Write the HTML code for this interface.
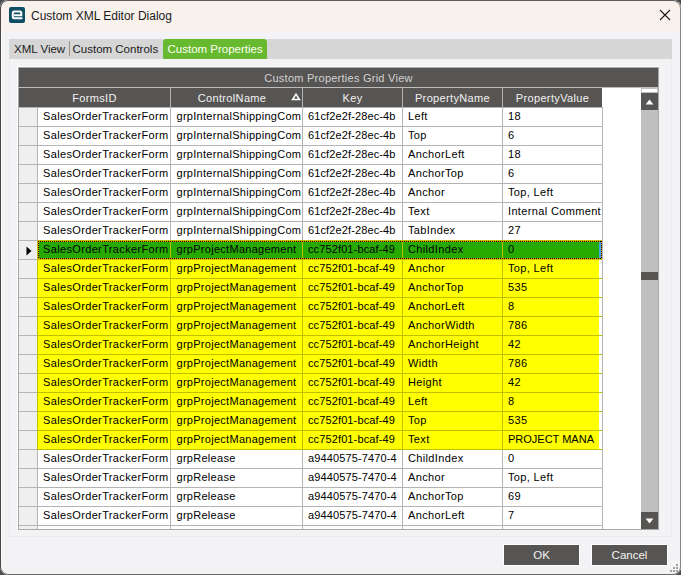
<!DOCTYPE html><html><head><meta charset="utf-8"><style>
*{margin:0;padding:0;box-sizing:border-box}
html,body{width:681px;height:575px;overflow:hidden;background:#4b4b4b;font-family:"Liberation Sans",sans-serif}
.a{position:absolute}
#win{position:absolute;left:0;top:0;width:681px;height:575px;background:#f3f3f5;border-radius:8px;overflow:hidden}
#frame{position:absolute;left:0;top:0;width:681px;height:575px;border-radius:8px;border:1px solid #5a5a5a;border-left-color:#474747;border-right-color:#858585;border-bottom-color:#6a6a6a;pointer-events:none}
.t{position:absolute;white-space:nowrap;overflow:hidden;font-size:11px;line-height:16px;height:18px;letter-spacing:0.35px;color:#000;padding-left:5px}
.k{letter-spacing:0.12px}
.c{letter-spacing:0.28px;padding-left:5.5px}
.u{letter-spacing:0}
.hd{position:absolute;white-space:nowrap;font-size:11px;line-height:17px;height:19px;letter-spacing:0.35px;color:#f2f2f2;text-align:center;background:#575553;padding-top:2px}
.tab{position:absolute;white-space:nowrap;font-size:11.5px;line-height:19px;color:#1a1a1a}
</style></head><body>
<div id="win">
<div class="a" style="left:0;top:0;width:681px;height:31px;background:#f9f1ec"></div>
<div class="a" style="left:1px;top:31px;width:1px;height:535px;background:#fbfbfc"></div>
<svg class="a" style="left:9px;top:7px" width="16" height="16" viewBox="0 0 16 16"><rect x="0" y="0" width="16" height="16" rx="2" fill="#0e4f64"/><path d="M13.4 11.3H5.3Q3.8 11.3 3.8 9.8V6Q3.8 4.5 5.3 4.5H10.8Q12.3 4.5 12.3 6V8.2H5" fill="none" stroke="#fff" stroke-width="2"/></svg>
<div class="a" style="left:31px;top:8px;font-size:12px;line-height:16px;color:#1a1a1a;white-space:nowrap">Custom XML Editor Dialog</div>
<svg class="a" style="left:659px;top:9px" width="12" height="12" viewBox="0 0 12 12"><path d="M1 1L11 11M11 1L1 11" stroke="#1a1a1a" stroke-width="1.1"/></svg>
<div class="a" style="left:9px;top:58px;width:663px;height:479px;border:1px solid #ebebed;border-top:none"></div>
<div class="a" style="left:9px;top:39px;width:663px;height:20px;background:#d6d6d6"></div>
<div class="tab" style="left:14px;top:40px">XML View</div>
<div class="a" style="left:69px;top:41px;width:1px;height:15px;background:#9a9080"></div>
<div class="tab" style="left:72.5px;top:40px">Custom Controls</div>
<div class="a" style="left:163px;top:39px;width:104px;height:20px;background:#67b92f;clip-path:polygon(2px 0,102px 0,104px 2px,104px 20px,0 20px,0 2px)"></div>
<div class="tab" style="left:167.5px;top:40px;color:#fffff4">Custom Properties</div>
<div class="a" style="left:17px;top:66px;width:642px;height:464px;border-left:1px solid #fff;border-top:1px solid #fff"></div>
<div class="a" style="left:18px;top:67px;width:641px;height:463px;border:1px solid #a8a8a8;background:#fff"></div>
<div class="a" style="left:19px;top:68px;width:639px;height:19px;background:#575553"></div>
<div class="a" style="left:19px;top:70px;width:639px;height:17px;font-size:11px;line-height:17px;letter-spacing:0.25px;color:#d2d2d2;text-align:center;white-space:nowrap">Custom Properties Grid View</div>
<div class="a" style="left:19px;top:87px;width:639px;height:1px;background:#bdbdbd"></div>
<div class="hd" style="left:19px;top:88px;width:151px;padding-right:0px">FormsID</div>
<div class="a" style="left:170px;top:88px;width:1px;height:19px;background:#b4b4b4"></div>
<div class="hd" style="left:171px;top:88px;width:131px;padding-right:9px">ControlName</div>
<div class="a" style="left:302px;top:88px;width:1px;height:19px;background:#b4b4b4"></div>
<div class="hd" style="left:303px;top:88px;width:99px;padding-right:0px">Key</div>
<div class="a" style="left:402px;top:88px;width:1px;height:19px;background:#b4b4b4"></div>
<div class="hd" style="left:403px;top:88px;width:99px;padding-right:0px">PropertyName</div>
<div class="a" style="left:502px;top:88px;width:1px;height:19px;background:#b4b4b4"></div>
<div class="hd" style="left:503px;top:88px;width:99px;padding-right:0px">PropertyValue</div>
<svg class="a" style="left:291px;top:92px" width="12" height="11" viewBox="0 0 12 11"><path d="M5 2.2L1.6 7.6H8.4Z" fill="none" stroke="#fff" stroke-width="1.5" stroke-linejoin="miter"/></svg>
<div class="a" style="left:19px;top:107px;width:584px;height:1px;background:#b4b4b4"></div>
<div class="a" style="left:19px;top:108px;width:622px;height:421px;overflow:hidden">
<div class="a" style="left:0;top:0px;width:18px;height:18px;background:#efefef"></div>
<div class="a" style="left:0;top:18px;width:19px;height:1px;background:#b4b4b4"></div>
<div class="a" style="left:18px;top:0px;width:1px;height:19px;background:#b4b4b4"></div>
<div class="a" style="left:19px;top:0px;width:565px;height:18px;background:#fff"></div>
<div class="a" style="left:19px;top:18px;width:565px;height:1px;background:#b4b4b4"></div>
<div class="t" style="left:19px;top:0px;width:132px">SalesOrderTrackerForm</div>
<div class="a" style="left:151px;top:0px;width:1px;height:19px;background:#b4b4b4"></div>
<div class="t c" style="left:152px;top:0px;width:131px">grpInternalShippingCom</div>
<div class="a" style="left:283px;top:0px;width:1px;height:19px;background:#b4b4b4"></div>
<div class="t k" style="left:284px;top:0px;width:99px">61cf2e2f-28ec-4b</div>
<div class="a" style="left:383px;top:0px;width:1px;height:19px;background:#b4b4b4"></div>
<div class="t" style="left:384px;top:0px;width:99px">Left</div>
<div class="a" style="left:483px;top:0px;width:1px;height:19px;background:#b4b4b4"></div>
<div class="t" style="left:484px;top:0px;width:99px">18</div>
<div class="a" style="left:583px;top:0px;width:1px;height:19px;background:#b4b4b4"></div>
<div class="a" style="left:0;top:19px;width:18px;height:18px;background:#efefef"></div>
<div class="a" style="left:0;top:37px;width:19px;height:1px;background:#b4b4b4"></div>
<div class="a" style="left:18px;top:19px;width:1px;height:19px;background:#b4b4b4"></div>
<div class="a" style="left:19px;top:19px;width:565px;height:18px;background:#fff"></div>
<div class="a" style="left:19px;top:37px;width:565px;height:1px;background:#b4b4b4"></div>
<div class="t" style="left:19px;top:19px;width:132px">SalesOrderTrackerForm</div>
<div class="a" style="left:151px;top:19px;width:1px;height:19px;background:#b4b4b4"></div>
<div class="t c" style="left:152px;top:19px;width:131px">grpInternalShippingCom</div>
<div class="a" style="left:283px;top:19px;width:1px;height:19px;background:#b4b4b4"></div>
<div class="t k" style="left:284px;top:19px;width:99px">61cf2e2f-28ec-4b</div>
<div class="a" style="left:383px;top:19px;width:1px;height:19px;background:#b4b4b4"></div>
<div class="t" style="left:384px;top:19px;width:99px">Top</div>
<div class="a" style="left:483px;top:19px;width:1px;height:19px;background:#b4b4b4"></div>
<div class="t" style="left:484px;top:19px;width:99px">6</div>
<div class="a" style="left:583px;top:19px;width:1px;height:19px;background:#b4b4b4"></div>
<div class="a" style="left:0;top:38px;width:18px;height:18px;background:#efefef"></div>
<div class="a" style="left:0;top:56px;width:19px;height:1px;background:#b4b4b4"></div>
<div class="a" style="left:18px;top:38px;width:1px;height:19px;background:#b4b4b4"></div>
<div class="a" style="left:19px;top:38px;width:565px;height:18px;background:#fff"></div>
<div class="a" style="left:19px;top:56px;width:565px;height:1px;background:#b4b4b4"></div>
<div class="t" style="left:19px;top:38px;width:132px">SalesOrderTrackerForm</div>
<div class="a" style="left:151px;top:38px;width:1px;height:19px;background:#b4b4b4"></div>
<div class="t c" style="left:152px;top:38px;width:131px">grpInternalShippingCom</div>
<div class="a" style="left:283px;top:38px;width:1px;height:19px;background:#b4b4b4"></div>
<div class="t k" style="left:284px;top:38px;width:99px">61cf2e2f-28ec-4b</div>
<div class="a" style="left:383px;top:38px;width:1px;height:19px;background:#b4b4b4"></div>
<div class="t" style="left:384px;top:38px;width:99px">AnchorLeft</div>
<div class="a" style="left:483px;top:38px;width:1px;height:19px;background:#b4b4b4"></div>
<div class="t" style="left:484px;top:38px;width:99px">18</div>
<div class="a" style="left:583px;top:38px;width:1px;height:19px;background:#b4b4b4"></div>
<div class="a" style="left:0;top:57px;width:18px;height:18px;background:#efefef"></div>
<div class="a" style="left:0;top:75px;width:19px;height:1px;background:#b4b4b4"></div>
<div class="a" style="left:18px;top:57px;width:1px;height:19px;background:#b4b4b4"></div>
<div class="a" style="left:19px;top:57px;width:565px;height:18px;background:#fff"></div>
<div class="a" style="left:19px;top:75px;width:565px;height:1px;background:#b4b4b4"></div>
<div class="t" style="left:19px;top:57px;width:132px">SalesOrderTrackerForm</div>
<div class="a" style="left:151px;top:57px;width:1px;height:19px;background:#b4b4b4"></div>
<div class="t c" style="left:152px;top:57px;width:131px">grpInternalShippingCom</div>
<div class="a" style="left:283px;top:57px;width:1px;height:19px;background:#b4b4b4"></div>
<div class="t k" style="left:284px;top:57px;width:99px">61cf2e2f-28ec-4b</div>
<div class="a" style="left:383px;top:57px;width:1px;height:19px;background:#b4b4b4"></div>
<div class="t" style="left:384px;top:57px;width:99px">AnchorTop</div>
<div class="a" style="left:483px;top:57px;width:1px;height:19px;background:#b4b4b4"></div>
<div class="t" style="left:484px;top:57px;width:99px">6</div>
<div class="a" style="left:583px;top:57px;width:1px;height:19px;background:#b4b4b4"></div>
<div class="a" style="left:0;top:76px;width:18px;height:18px;background:#efefef"></div>
<div class="a" style="left:0;top:94px;width:19px;height:1px;background:#b4b4b4"></div>
<div class="a" style="left:18px;top:76px;width:1px;height:19px;background:#b4b4b4"></div>
<div class="a" style="left:19px;top:76px;width:565px;height:18px;background:#fff"></div>
<div class="a" style="left:19px;top:94px;width:565px;height:1px;background:#b4b4b4"></div>
<div class="t" style="left:19px;top:76px;width:132px">SalesOrderTrackerForm</div>
<div class="a" style="left:151px;top:76px;width:1px;height:19px;background:#b4b4b4"></div>
<div class="t c" style="left:152px;top:76px;width:131px">grpInternalShippingCom</div>
<div class="a" style="left:283px;top:76px;width:1px;height:19px;background:#b4b4b4"></div>
<div class="t k" style="left:284px;top:76px;width:99px">61cf2e2f-28ec-4b</div>
<div class="a" style="left:383px;top:76px;width:1px;height:19px;background:#b4b4b4"></div>
<div class="t" style="left:384px;top:76px;width:99px">Anchor</div>
<div class="a" style="left:483px;top:76px;width:1px;height:19px;background:#b4b4b4"></div>
<div class="t" style="left:484px;top:76px;width:99px">Top, Left</div>
<div class="a" style="left:583px;top:76px;width:1px;height:19px;background:#b4b4b4"></div>
<div class="a" style="left:0;top:95px;width:18px;height:18px;background:#efefef"></div>
<div class="a" style="left:0;top:113px;width:19px;height:1px;background:#b4b4b4"></div>
<div class="a" style="left:18px;top:95px;width:1px;height:19px;background:#b4b4b4"></div>
<div class="a" style="left:19px;top:95px;width:565px;height:18px;background:#fff"></div>
<div class="a" style="left:19px;top:113px;width:565px;height:1px;background:#b4b4b4"></div>
<div class="t" style="left:19px;top:95px;width:132px">SalesOrderTrackerForm</div>
<div class="a" style="left:151px;top:95px;width:1px;height:19px;background:#b4b4b4"></div>
<div class="t c" style="left:152px;top:95px;width:131px">grpInternalShippingCom</div>
<div class="a" style="left:283px;top:95px;width:1px;height:19px;background:#b4b4b4"></div>
<div class="t k" style="left:284px;top:95px;width:99px">61cf2e2f-28ec-4b</div>
<div class="a" style="left:383px;top:95px;width:1px;height:19px;background:#b4b4b4"></div>
<div class="t" style="left:384px;top:95px;width:99px">Text</div>
<div class="a" style="left:483px;top:95px;width:1px;height:19px;background:#b4b4b4"></div>
<div class="t" style="left:484px;top:95px;width:99px">Internal Comment</div>
<div class="a" style="left:583px;top:95px;width:1px;height:19px;background:#b4b4b4"></div>
<div class="a" style="left:0;top:114px;width:18px;height:18px;background:#efefef"></div>
<div class="a" style="left:0;top:132px;width:19px;height:1px;background:#b4b4b4"></div>
<div class="a" style="left:18px;top:114px;width:1px;height:19px;background:#b4b4b4"></div>
<div class="a" style="left:19px;top:114px;width:565px;height:18px;background:#fff"></div>
<div class="a" style="left:19px;top:132px;width:565px;height:1px;background:#b4b4b4"></div>
<div class="t" style="left:19px;top:114px;width:132px">SalesOrderTrackerForm</div>
<div class="a" style="left:151px;top:114px;width:1px;height:19px;background:#b4b4b4"></div>
<div class="t c" style="left:152px;top:114px;width:131px">grpInternalShippingCom</div>
<div class="a" style="left:283px;top:114px;width:1px;height:19px;background:#b4b4b4"></div>
<div class="t k" style="left:284px;top:114px;width:99px">61cf2e2f-28ec-4b</div>
<div class="a" style="left:383px;top:114px;width:1px;height:19px;background:#b4b4b4"></div>
<div class="t" style="left:384px;top:114px;width:99px">TabIndex</div>
<div class="a" style="left:483px;top:114px;width:1px;height:19px;background:#b4b4b4"></div>
<div class="t" style="left:484px;top:114px;width:99px">27</div>
<div class="a" style="left:583px;top:114px;width:1px;height:19px;background:#b4b4b4"></div>
<div class="a" style="left:0;top:133px;width:18px;height:18px;background:#efefef"></div>
<div class="a" style="left:0;top:151px;width:19px;height:1px;background:#b4b4b4"></div>
<div class="a" style="left:18px;top:133px;width:1px;height:19px;background:#c0c000"></div>
<div class="a" style="left:19px;top:133px;width:565px;height:18px;background:#fff"></div>
<div class="a" style="left:19px;top:151px;width:564px;height:1px;background:#c0c000"></div>
<div class="a" style="left:19px;top:132px;width:564px;height:1px;background:#c0c000"></div>
<div class="a" style="left:19px;top:133px;width:132px;height:18px;background:#27aa00"></div>
<div class="t" style="left:19px;top:133px;width:132px">SalesOrderTrackerForm</div>
<div class="a" style="left:151px;top:133px;width:1px;height:19px;background:#c0c000"></div>
<div class="a" style="left:152px;top:133px;width:131px;height:18px;background:#27aa00"></div>
<div class="t c" style="left:152px;top:133px;width:131px">grpProjectManagement</div>
<div class="a" style="left:283px;top:133px;width:1px;height:19px;background:#c0c000"></div>
<div class="a" style="left:284px;top:133px;width:99px;height:18px;background:#27aa00"></div>
<div class="t k" style="left:284px;top:133px;width:99px">cc752f01-bcaf-49</div>
<div class="a" style="left:383px;top:133px;width:1px;height:19px;background:#c0c000"></div>
<div class="a" style="left:384px;top:133px;width:99px;height:18px;background:#27aa00"></div>
<div class="t" style="left:384px;top:133px;width:99px">ChildIndex</div>
<div class="a" style="left:483px;top:133px;width:1px;height:19px;background:#c0c000"></div>
<div class="a" style="left:484px;top:133px;width:96px;height:18px;background:#27aa00"></div>
<div class="t" style="left:484px;top:133px;width:99px">0</div>
<div class="a" style="left:583px;top:133px;width:1px;height:19px;background:#b4b4b4"></div>
<div class="a" style="left:580px;top:133px;width:2px;height:18px;background:#3da5f0"></div>
<div class="a" style="left:19px;top:133px;width:564px;height:1px;background:repeating-linear-gradient(90deg,#000 0 1px,#ff9a00 1px 2px)"></div>
<div class="a" style="left:19px;top:150px;width:564px;height:1px;background:repeating-linear-gradient(90deg,#000 0 1px,#ff9a00 1px 2px)"></div>
<div class="a" style="left:19px;top:133px;width:1px;height:18px;background:repeating-linear-gradient(180deg,#000 0 1px,#ff9a00 1px 2px)"></div>
<div class="a" style="left:582px;top:133px;width:1px;height:18px;background:repeating-linear-gradient(180deg,#000 0 1px,#ff9a00 1px 2px)"></div>
<svg class="a" style="left:7px;top:138px" width="7" height="10" viewBox="0 0 7 10"><path d="M0.5 0.5L5.5 5L0.5 9.5Z" fill="#000"/></svg>
<div class="a" style="left:0;top:152px;width:18px;height:18px;background:#efefef"></div>
<div class="a" style="left:0;top:170px;width:19px;height:1px;background:#b4b4b4"></div>
<div class="a" style="left:18px;top:152px;width:1px;height:19px;background:#c0c000"></div>
<div class="a" style="left:19px;top:152px;width:565px;height:18px;background:#fff"></div>
<div class="a" style="left:19px;top:170px;width:564px;height:1px;background:#c0c000"></div>
<div class="a" style="left:19px;top:151px;width:564px;height:1px;background:#c0c000"></div>
<div class="a" style="left:19px;top:152px;width:132px;height:18px;background:#ffff00"></div>
<div class="t" style="left:19px;top:152px;width:132px">SalesOrderTrackerForm</div>
<div class="a" style="left:151px;top:152px;width:1px;height:19px;background:#c0c000"></div>
<div class="a" style="left:152px;top:152px;width:131px;height:18px;background:#ffff00"></div>
<div class="t c" style="left:152px;top:152px;width:131px">grpProjectManagement</div>
<div class="a" style="left:283px;top:152px;width:1px;height:19px;background:#c0c000"></div>
<div class="a" style="left:284px;top:152px;width:99px;height:18px;background:#ffff00"></div>
<div class="t k" style="left:284px;top:152px;width:99px">cc752f01-bcaf-49</div>
<div class="a" style="left:383px;top:152px;width:1px;height:19px;background:#c0c000"></div>
<div class="a" style="left:384px;top:152px;width:99px;height:18px;background:#ffff00"></div>
<div class="t" style="left:384px;top:152px;width:99px">Anchor</div>
<div class="a" style="left:483px;top:152px;width:1px;height:19px;background:#c0c000"></div>
<div class="a" style="left:484px;top:152px;width:96px;height:18px;background:#ffff00"></div>
<div class="t" style="left:484px;top:152px;width:99px">Top, Left</div>
<div class="a" style="left:583px;top:152px;width:1px;height:19px;background:#b4b4b4"></div>
<div class="a" style="left:0;top:171px;width:18px;height:18px;background:#efefef"></div>
<div class="a" style="left:0;top:189px;width:19px;height:1px;background:#b4b4b4"></div>
<div class="a" style="left:18px;top:171px;width:1px;height:19px;background:#c0c000"></div>
<div class="a" style="left:19px;top:171px;width:565px;height:18px;background:#fff"></div>
<div class="a" style="left:19px;top:189px;width:564px;height:1px;background:#c0c000"></div>
<div class="a" style="left:19px;top:170px;width:564px;height:1px;background:#c0c000"></div>
<div class="a" style="left:19px;top:171px;width:132px;height:18px;background:#ffff00"></div>
<div class="t" style="left:19px;top:171px;width:132px">SalesOrderTrackerForm</div>
<div class="a" style="left:151px;top:171px;width:1px;height:19px;background:#c0c000"></div>
<div class="a" style="left:152px;top:171px;width:131px;height:18px;background:#ffff00"></div>
<div class="t c" style="left:152px;top:171px;width:131px">grpProjectManagement</div>
<div class="a" style="left:283px;top:171px;width:1px;height:19px;background:#c0c000"></div>
<div class="a" style="left:284px;top:171px;width:99px;height:18px;background:#ffff00"></div>
<div class="t k" style="left:284px;top:171px;width:99px">cc752f01-bcaf-49</div>
<div class="a" style="left:383px;top:171px;width:1px;height:19px;background:#c0c000"></div>
<div class="a" style="left:384px;top:171px;width:99px;height:18px;background:#ffff00"></div>
<div class="t" style="left:384px;top:171px;width:99px">AnchorTop</div>
<div class="a" style="left:483px;top:171px;width:1px;height:19px;background:#c0c000"></div>
<div class="a" style="left:484px;top:171px;width:96px;height:18px;background:#ffff00"></div>
<div class="t" style="left:484px;top:171px;width:99px">535</div>
<div class="a" style="left:583px;top:171px;width:1px;height:19px;background:#b4b4b4"></div>
<div class="a" style="left:0;top:190px;width:18px;height:18px;background:#efefef"></div>
<div class="a" style="left:0;top:208px;width:19px;height:1px;background:#b4b4b4"></div>
<div class="a" style="left:18px;top:190px;width:1px;height:19px;background:#c0c000"></div>
<div class="a" style="left:19px;top:190px;width:565px;height:18px;background:#fff"></div>
<div class="a" style="left:19px;top:208px;width:564px;height:1px;background:#c0c000"></div>
<div class="a" style="left:19px;top:189px;width:564px;height:1px;background:#c0c000"></div>
<div class="a" style="left:19px;top:190px;width:132px;height:18px;background:#ffff00"></div>
<div class="t" style="left:19px;top:190px;width:132px">SalesOrderTrackerForm</div>
<div class="a" style="left:151px;top:190px;width:1px;height:19px;background:#c0c000"></div>
<div class="a" style="left:152px;top:190px;width:131px;height:18px;background:#ffff00"></div>
<div class="t c" style="left:152px;top:190px;width:131px">grpProjectManagement</div>
<div class="a" style="left:283px;top:190px;width:1px;height:19px;background:#c0c000"></div>
<div class="a" style="left:284px;top:190px;width:99px;height:18px;background:#ffff00"></div>
<div class="t k" style="left:284px;top:190px;width:99px">cc752f01-bcaf-49</div>
<div class="a" style="left:383px;top:190px;width:1px;height:19px;background:#c0c000"></div>
<div class="a" style="left:384px;top:190px;width:99px;height:18px;background:#ffff00"></div>
<div class="t" style="left:384px;top:190px;width:99px">AnchorLeft</div>
<div class="a" style="left:483px;top:190px;width:1px;height:19px;background:#c0c000"></div>
<div class="a" style="left:484px;top:190px;width:96px;height:18px;background:#ffff00"></div>
<div class="t" style="left:484px;top:190px;width:99px">8</div>
<div class="a" style="left:583px;top:190px;width:1px;height:19px;background:#b4b4b4"></div>
<div class="a" style="left:0;top:209px;width:18px;height:18px;background:#efefef"></div>
<div class="a" style="left:0;top:227px;width:19px;height:1px;background:#b4b4b4"></div>
<div class="a" style="left:18px;top:209px;width:1px;height:19px;background:#c0c000"></div>
<div class="a" style="left:19px;top:209px;width:565px;height:18px;background:#fff"></div>
<div class="a" style="left:19px;top:227px;width:564px;height:1px;background:#c0c000"></div>
<div class="a" style="left:19px;top:208px;width:564px;height:1px;background:#c0c000"></div>
<div class="a" style="left:19px;top:209px;width:132px;height:18px;background:#ffff00"></div>
<div class="t" style="left:19px;top:209px;width:132px">SalesOrderTrackerForm</div>
<div class="a" style="left:151px;top:209px;width:1px;height:19px;background:#c0c000"></div>
<div class="a" style="left:152px;top:209px;width:131px;height:18px;background:#ffff00"></div>
<div class="t c" style="left:152px;top:209px;width:131px">grpProjectManagement</div>
<div class="a" style="left:283px;top:209px;width:1px;height:19px;background:#c0c000"></div>
<div class="a" style="left:284px;top:209px;width:99px;height:18px;background:#ffff00"></div>
<div class="t k" style="left:284px;top:209px;width:99px">cc752f01-bcaf-49</div>
<div class="a" style="left:383px;top:209px;width:1px;height:19px;background:#c0c000"></div>
<div class="a" style="left:384px;top:209px;width:99px;height:18px;background:#ffff00"></div>
<div class="t" style="left:384px;top:209px;width:99px">AnchorWidth</div>
<div class="a" style="left:483px;top:209px;width:1px;height:19px;background:#c0c000"></div>
<div class="a" style="left:484px;top:209px;width:96px;height:18px;background:#ffff00"></div>
<div class="t" style="left:484px;top:209px;width:99px">786</div>
<div class="a" style="left:583px;top:209px;width:1px;height:19px;background:#b4b4b4"></div>
<div class="a" style="left:0;top:228px;width:18px;height:18px;background:#efefef"></div>
<div class="a" style="left:0;top:246px;width:19px;height:1px;background:#b4b4b4"></div>
<div class="a" style="left:18px;top:228px;width:1px;height:19px;background:#c0c000"></div>
<div class="a" style="left:19px;top:228px;width:565px;height:18px;background:#fff"></div>
<div class="a" style="left:19px;top:246px;width:564px;height:1px;background:#c0c000"></div>
<div class="a" style="left:19px;top:227px;width:564px;height:1px;background:#c0c000"></div>
<div class="a" style="left:19px;top:228px;width:132px;height:18px;background:#ffff00"></div>
<div class="t" style="left:19px;top:228px;width:132px">SalesOrderTrackerForm</div>
<div class="a" style="left:151px;top:228px;width:1px;height:19px;background:#c0c000"></div>
<div class="a" style="left:152px;top:228px;width:131px;height:18px;background:#ffff00"></div>
<div class="t c" style="left:152px;top:228px;width:131px">grpProjectManagement</div>
<div class="a" style="left:283px;top:228px;width:1px;height:19px;background:#c0c000"></div>
<div class="a" style="left:284px;top:228px;width:99px;height:18px;background:#ffff00"></div>
<div class="t k" style="left:284px;top:228px;width:99px">cc752f01-bcaf-49</div>
<div class="a" style="left:383px;top:228px;width:1px;height:19px;background:#c0c000"></div>
<div class="a" style="left:384px;top:228px;width:99px;height:18px;background:#ffff00"></div>
<div class="t" style="left:384px;top:228px;width:99px">AnchorHeight</div>
<div class="a" style="left:483px;top:228px;width:1px;height:19px;background:#c0c000"></div>
<div class="a" style="left:484px;top:228px;width:96px;height:18px;background:#ffff00"></div>
<div class="t" style="left:484px;top:228px;width:99px">42</div>
<div class="a" style="left:583px;top:228px;width:1px;height:19px;background:#b4b4b4"></div>
<div class="a" style="left:0;top:247px;width:18px;height:18px;background:#efefef"></div>
<div class="a" style="left:0;top:265px;width:19px;height:1px;background:#b4b4b4"></div>
<div class="a" style="left:18px;top:247px;width:1px;height:19px;background:#c0c000"></div>
<div class="a" style="left:19px;top:247px;width:565px;height:18px;background:#fff"></div>
<div class="a" style="left:19px;top:265px;width:564px;height:1px;background:#c0c000"></div>
<div class="a" style="left:19px;top:246px;width:564px;height:1px;background:#c0c000"></div>
<div class="a" style="left:19px;top:247px;width:132px;height:18px;background:#ffff00"></div>
<div class="t" style="left:19px;top:247px;width:132px">SalesOrderTrackerForm</div>
<div class="a" style="left:151px;top:247px;width:1px;height:19px;background:#c0c000"></div>
<div class="a" style="left:152px;top:247px;width:131px;height:18px;background:#ffff00"></div>
<div class="t c" style="left:152px;top:247px;width:131px">grpProjectManagement</div>
<div class="a" style="left:283px;top:247px;width:1px;height:19px;background:#c0c000"></div>
<div class="a" style="left:284px;top:247px;width:99px;height:18px;background:#ffff00"></div>
<div class="t k" style="left:284px;top:247px;width:99px">cc752f01-bcaf-49</div>
<div class="a" style="left:383px;top:247px;width:1px;height:19px;background:#c0c000"></div>
<div class="a" style="left:384px;top:247px;width:99px;height:18px;background:#ffff00"></div>
<div class="t" style="left:384px;top:247px;width:99px">Width</div>
<div class="a" style="left:483px;top:247px;width:1px;height:19px;background:#c0c000"></div>
<div class="a" style="left:484px;top:247px;width:96px;height:18px;background:#ffff00"></div>
<div class="t" style="left:484px;top:247px;width:99px">786</div>
<div class="a" style="left:583px;top:247px;width:1px;height:19px;background:#b4b4b4"></div>
<div class="a" style="left:0;top:266px;width:18px;height:18px;background:#efefef"></div>
<div class="a" style="left:0;top:284px;width:19px;height:1px;background:#b4b4b4"></div>
<div class="a" style="left:18px;top:266px;width:1px;height:19px;background:#c0c000"></div>
<div class="a" style="left:19px;top:266px;width:565px;height:18px;background:#fff"></div>
<div class="a" style="left:19px;top:284px;width:564px;height:1px;background:#c0c000"></div>
<div class="a" style="left:19px;top:265px;width:564px;height:1px;background:#c0c000"></div>
<div class="a" style="left:19px;top:266px;width:132px;height:18px;background:#ffff00"></div>
<div class="t" style="left:19px;top:266px;width:132px">SalesOrderTrackerForm</div>
<div class="a" style="left:151px;top:266px;width:1px;height:19px;background:#c0c000"></div>
<div class="a" style="left:152px;top:266px;width:131px;height:18px;background:#ffff00"></div>
<div class="t c" style="left:152px;top:266px;width:131px">grpProjectManagement</div>
<div class="a" style="left:283px;top:266px;width:1px;height:19px;background:#c0c000"></div>
<div class="a" style="left:284px;top:266px;width:99px;height:18px;background:#ffff00"></div>
<div class="t k" style="left:284px;top:266px;width:99px">cc752f01-bcaf-49</div>
<div class="a" style="left:383px;top:266px;width:1px;height:19px;background:#c0c000"></div>
<div class="a" style="left:384px;top:266px;width:99px;height:18px;background:#ffff00"></div>
<div class="t" style="left:384px;top:266px;width:99px">Height</div>
<div class="a" style="left:483px;top:266px;width:1px;height:19px;background:#c0c000"></div>
<div class="a" style="left:484px;top:266px;width:96px;height:18px;background:#ffff00"></div>
<div class="t" style="left:484px;top:266px;width:99px">42</div>
<div class="a" style="left:583px;top:266px;width:1px;height:19px;background:#b4b4b4"></div>
<div class="a" style="left:0;top:285px;width:18px;height:18px;background:#efefef"></div>
<div class="a" style="left:0;top:303px;width:19px;height:1px;background:#b4b4b4"></div>
<div class="a" style="left:18px;top:285px;width:1px;height:19px;background:#c0c000"></div>
<div class="a" style="left:19px;top:285px;width:565px;height:18px;background:#fff"></div>
<div class="a" style="left:19px;top:303px;width:564px;height:1px;background:#c0c000"></div>
<div class="a" style="left:19px;top:284px;width:564px;height:1px;background:#c0c000"></div>
<div class="a" style="left:19px;top:285px;width:132px;height:18px;background:#ffff00"></div>
<div class="t" style="left:19px;top:285px;width:132px">SalesOrderTrackerForm</div>
<div class="a" style="left:151px;top:285px;width:1px;height:19px;background:#c0c000"></div>
<div class="a" style="left:152px;top:285px;width:131px;height:18px;background:#ffff00"></div>
<div class="t c" style="left:152px;top:285px;width:131px">grpProjectManagement</div>
<div class="a" style="left:283px;top:285px;width:1px;height:19px;background:#c0c000"></div>
<div class="a" style="left:284px;top:285px;width:99px;height:18px;background:#ffff00"></div>
<div class="t k" style="left:284px;top:285px;width:99px">cc752f01-bcaf-49</div>
<div class="a" style="left:383px;top:285px;width:1px;height:19px;background:#c0c000"></div>
<div class="a" style="left:384px;top:285px;width:99px;height:18px;background:#ffff00"></div>
<div class="t" style="left:384px;top:285px;width:99px">Left</div>
<div class="a" style="left:483px;top:285px;width:1px;height:19px;background:#c0c000"></div>
<div class="a" style="left:484px;top:285px;width:96px;height:18px;background:#ffff00"></div>
<div class="t" style="left:484px;top:285px;width:99px">8</div>
<div class="a" style="left:583px;top:285px;width:1px;height:19px;background:#b4b4b4"></div>
<div class="a" style="left:0;top:304px;width:18px;height:18px;background:#efefef"></div>
<div class="a" style="left:0;top:322px;width:19px;height:1px;background:#b4b4b4"></div>
<div class="a" style="left:18px;top:304px;width:1px;height:19px;background:#c0c000"></div>
<div class="a" style="left:19px;top:304px;width:565px;height:18px;background:#fff"></div>
<div class="a" style="left:19px;top:322px;width:564px;height:1px;background:#c0c000"></div>
<div class="a" style="left:19px;top:303px;width:564px;height:1px;background:#c0c000"></div>
<div class="a" style="left:19px;top:304px;width:132px;height:18px;background:#ffff00"></div>
<div class="t" style="left:19px;top:304px;width:132px">SalesOrderTrackerForm</div>
<div class="a" style="left:151px;top:304px;width:1px;height:19px;background:#c0c000"></div>
<div class="a" style="left:152px;top:304px;width:131px;height:18px;background:#ffff00"></div>
<div class="t c" style="left:152px;top:304px;width:131px">grpProjectManagement</div>
<div class="a" style="left:283px;top:304px;width:1px;height:19px;background:#c0c000"></div>
<div class="a" style="left:284px;top:304px;width:99px;height:18px;background:#ffff00"></div>
<div class="t k" style="left:284px;top:304px;width:99px">cc752f01-bcaf-49</div>
<div class="a" style="left:383px;top:304px;width:1px;height:19px;background:#c0c000"></div>
<div class="a" style="left:384px;top:304px;width:99px;height:18px;background:#ffff00"></div>
<div class="t" style="left:384px;top:304px;width:99px">Top</div>
<div class="a" style="left:483px;top:304px;width:1px;height:19px;background:#c0c000"></div>
<div class="a" style="left:484px;top:304px;width:96px;height:18px;background:#ffff00"></div>
<div class="t" style="left:484px;top:304px;width:99px">535</div>
<div class="a" style="left:583px;top:304px;width:1px;height:19px;background:#b4b4b4"></div>
<div class="a" style="left:0;top:323px;width:18px;height:18px;background:#efefef"></div>
<div class="a" style="left:0;top:341px;width:19px;height:1px;background:#b4b4b4"></div>
<div class="a" style="left:18px;top:323px;width:1px;height:19px;background:#c0c000"></div>
<div class="a" style="left:19px;top:323px;width:565px;height:18px;background:#fff"></div>
<div class="a" style="left:19px;top:341px;width:564px;height:1px;background:#c0c000"></div>
<div class="a" style="left:19px;top:322px;width:564px;height:1px;background:#c0c000"></div>
<div class="a" style="left:19px;top:323px;width:132px;height:18px;background:#ffff00"></div>
<div class="t" style="left:19px;top:323px;width:132px">SalesOrderTrackerForm</div>
<div class="a" style="left:151px;top:323px;width:1px;height:19px;background:#c0c000"></div>
<div class="a" style="left:152px;top:323px;width:131px;height:18px;background:#ffff00"></div>
<div class="t c" style="left:152px;top:323px;width:131px">grpProjectManagement</div>
<div class="a" style="left:283px;top:323px;width:1px;height:19px;background:#c0c000"></div>
<div class="a" style="left:284px;top:323px;width:99px;height:18px;background:#ffff00"></div>
<div class="t k" style="left:284px;top:323px;width:99px">cc752f01-bcaf-49</div>
<div class="a" style="left:383px;top:323px;width:1px;height:19px;background:#c0c000"></div>
<div class="a" style="left:384px;top:323px;width:99px;height:18px;background:#ffff00"></div>
<div class="t" style="left:384px;top:323px;width:99px">Text</div>
<div class="a" style="left:483px;top:323px;width:1px;height:19px;background:#c0c000"></div>
<div class="a" style="left:484px;top:323px;width:96px;height:18px;background:#ffff00"></div>
<div class="t u" style="left:484px;top:323px;width:99px">PROJECT MANA</div>
<div class="a" style="left:583px;top:323px;width:1px;height:19px;background:#b4b4b4"></div>
<div class="a" style="left:0;top:342px;width:18px;height:18px;background:#efefef"></div>
<div class="a" style="left:0;top:360px;width:19px;height:1px;background:#b4b4b4"></div>
<div class="a" style="left:18px;top:342px;width:1px;height:19px;background:#b4b4b4"></div>
<div class="a" style="left:19px;top:342px;width:565px;height:18px;background:#fff"></div>
<div class="a" style="left:19px;top:360px;width:565px;height:1px;background:#b4b4b4"></div>
<div class="t" style="left:19px;top:342px;width:132px">SalesOrderTrackerForm</div>
<div class="a" style="left:151px;top:342px;width:1px;height:19px;background:#b4b4b4"></div>
<div class="t c" style="left:152px;top:342px;width:131px">grpRelease</div>
<div class="a" style="left:283px;top:342px;width:1px;height:19px;background:#b4b4b4"></div>
<div class="t k" style="left:284px;top:342px;width:99px">a9440575-7470-4</div>
<div class="a" style="left:383px;top:342px;width:1px;height:19px;background:#b4b4b4"></div>
<div class="t" style="left:384px;top:342px;width:99px">ChildIndex</div>
<div class="a" style="left:483px;top:342px;width:1px;height:19px;background:#b4b4b4"></div>
<div class="t" style="left:484px;top:342px;width:99px">0</div>
<div class="a" style="left:583px;top:342px;width:1px;height:19px;background:#b4b4b4"></div>
<div class="a" style="left:0;top:361px;width:18px;height:18px;background:#efefef"></div>
<div class="a" style="left:0;top:379px;width:19px;height:1px;background:#b4b4b4"></div>
<div class="a" style="left:18px;top:361px;width:1px;height:19px;background:#b4b4b4"></div>
<div class="a" style="left:19px;top:361px;width:565px;height:18px;background:#fff"></div>
<div class="a" style="left:19px;top:379px;width:565px;height:1px;background:#b4b4b4"></div>
<div class="t" style="left:19px;top:361px;width:132px">SalesOrderTrackerForm</div>
<div class="a" style="left:151px;top:361px;width:1px;height:19px;background:#b4b4b4"></div>
<div class="t c" style="left:152px;top:361px;width:131px">grpRelease</div>
<div class="a" style="left:283px;top:361px;width:1px;height:19px;background:#b4b4b4"></div>
<div class="t k" style="left:284px;top:361px;width:99px">a9440575-7470-4</div>
<div class="a" style="left:383px;top:361px;width:1px;height:19px;background:#b4b4b4"></div>
<div class="t" style="left:384px;top:361px;width:99px">Anchor</div>
<div class="a" style="left:483px;top:361px;width:1px;height:19px;background:#b4b4b4"></div>
<div class="t" style="left:484px;top:361px;width:99px">Top, Left</div>
<div class="a" style="left:583px;top:361px;width:1px;height:19px;background:#b4b4b4"></div>
<div class="a" style="left:0;top:380px;width:18px;height:18px;background:#efefef"></div>
<div class="a" style="left:0;top:398px;width:19px;height:1px;background:#b4b4b4"></div>
<div class="a" style="left:18px;top:380px;width:1px;height:19px;background:#b4b4b4"></div>
<div class="a" style="left:19px;top:380px;width:565px;height:18px;background:#fff"></div>
<div class="a" style="left:19px;top:398px;width:565px;height:1px;background:#b4b4b4"></div>
<div class="t" style="left:19px;top:380px;width:132px">SalesOrderTrackerForm</div>
<div class="a" style="left:151px;top:380px;width:1px;height:19px;background:#b4b4b4"></div>
<div class="t c" style="left:152px;top:380px;width:131px">grpRelease</div>
<div class="a" style="left:283px;top:380px;width:1px;height:19px;background:#b4b4b4"></div>
<div class="t k" style="left:284px;top:380px;width:99px">a9440575-7470-4</div>
<div class="a" style="left:383px;top:380px;width:1px;height:19px;background:#b4b4b4"></div>
<div class="t" style="left:384px;top:380px;width:99px">AnchorTop</div>
<div class="a" style="left:483px;top:380px;width:1px;height:19px;background:#b4b4b4"></div>
<div class="t" style="left:484px;top:380px;width:99px">69</div>
<div class="a" style="left:583px;top:380px;width:1px;height:19px;background:#b4b4b4"></div>
<div class="a" style="left:0;top:399px;width:18px;height:18px;background:#efefef"></div>
<div class="a" style="left:0;top:417px;width:19px;height:1px;background:#b4b4b4"></div>
<div class="a" style="left:18px;top:399px;width:1px;height:19px;background:#b4b4b4"></div>
<div class="a" style="left:19px;top:399px;width:565px;height:18px;background:#fff"></div>
<div class="a" style="left:19px;top:417px;width:565px;height:1px;background:#b4b4b4"></div>
<div class="t" style="left:19px;top:399px;width:132px">SalesOrderTrackerForm</div>
<div class="a" style="left:151px;top:399px;width:1px;height:19px;background:#b4b4b4"></div>
<div class="t c" style="left:152px;top:399px;width:131px">grpRelease</div>
<div class="a" style="left:283px;top:399px;width:1px;height:19px;background:#b4b4b4"></div>
<div class="t k" style="left:284px;top:399px;width:99px">a9440575-7470-4</div>
<div class="a" style="left:383px;top:399px;width:1px;height:19px;background:#b4b4b4"></div>
<div class="t" style="left:384px;top:399px;width:99px">AnchorLeft</div>
<div class="a" style="left:483px;top:399px;width:1px;height:19px;background:#b4b4b4"></div>
<div class="t" style="left:484px;top:399px;width:99px">7</div>
<div class="a" style="left:583px;top:399px;width:1px;height:19px;background:#b4b4b4"></div>
<div class="a" style="left:0;top:418px;width:18px;height:18px;background:#efefef"></div>
<div class="a" style="left:0;top:436px;width:19px;height:1px;background:#b4b4b4"></div>
<div class="a" style="left:18px;top:418px;width:1px;height:19px;background:#b4b4b4"></div>
<div class="a" style="left:19px;top:418px;width:565px;height:18px;background:#fff"></div>
<div class="a" style="left:19px;top:436px;width:565px;height:1px;background:#b4b4b4"></div>
<div class="t" style="left:19px;top:418px;width:132px"></div>
<div class="a" style="left:151px;top:418px;width:1px;height:19px;background:#b4b4b4"></div>
<div class="t c" style="left:152px;top:418px;width:131px"></div>
<div class="a" style="left:283px;top:418px;width:1px;height:19px;background:#b4b4b4"></div>
<div class="t k" style="left:284px;top:418px;width:99px"></div>
<div class="a" style="left:383px;top:418px;width:1px;height:19px;background:#b4b4b4"></div>
<div class="t" style="left:384px;top:418px;width:99px"></div>
<div class="a" style="left:483px;top:418px;width:1px;height:19px;background:#b4b4b4"></div>
<div class="t" style="left:484px;top:418px;width:99px"></div>
<div class="a" style="left:583px;top:418px;width:1px;height:19px;background:#b4b4b4"></div>
</div>
<div class="a" style="left:641px;top:87px;width:17px;height:442px;background:#c0c0c0"></div>
<div class="a" style="left:642px;top:89px;width:15px;height:3px;background:#fff"></div>
<div class="a" style="left:641px;top:93px;width:17px;height:17px;background:#575553"></div>
<svg class="a" style="left:641px;top:93px" width="17" height="17" viewBox="0 0 17 17"><path d="M4.6 11.4L8.5 6.6L12.4 11.4Z" fill="#fff"/></svg>
<div class="a" style="left:641px;top:272px;width:17px;height:8px;background:#575553"></div>
<div class="a" style="left:641px;top:512px;width:17px;height:17px;background:#575553"></div>
<svg class="a" style="left:641px;top:512px" width="17" height="17" viewBox="0 0 17 17"><path d="M4.6 6.6L8.5 11.4L12.4 6.6Z" fill="#fff"/></svg>
<div class="a" style="left:503px;top:544px;width:77px;height:22px;border:1px solid #fff"></div>
<div class="a" style="left:504px;top:545px;width:75px;height:20px;background:#575553;color:#f4f4f4;font-size:11.5px;line-height:21px;text-align:center">OK</div>
<div class="a" style="left:591px;top:544px;width:77px;height:22px;border:1px solid #fff"></div>
<div class="a" style="left:592px;top:545px;width:75px;height:20px;background:#575553;color:#f4f4f4;font-size:11.5px;line-height:21px;text-align:center">Cancel</div>
<div class="a" style="left:676px;top:564px;width:2px;height:2px;background:#a4a4a4"></div>
<div class="a" style="left:673px;top:567px;width:2px;height:2px;background:#a4a4a4"></div>
<div class="a" style="left:676px;top:567px;width:2px;height:2px;background:#a4a4a4"></div>
<div class="a" style="left:670px;top:570px;width:2px;height:2px;background:#a4a4a4"></div>
<div class="a" style="left:673px;top:570px;width:2px;height:2px;background:#a4a4a4"></div>
<div class="a" style="left:676px;top:570px;width:2px;height:2px;background:#a4a4a4"></div>
</div>
<div id="frame"></div>
</body></html>
